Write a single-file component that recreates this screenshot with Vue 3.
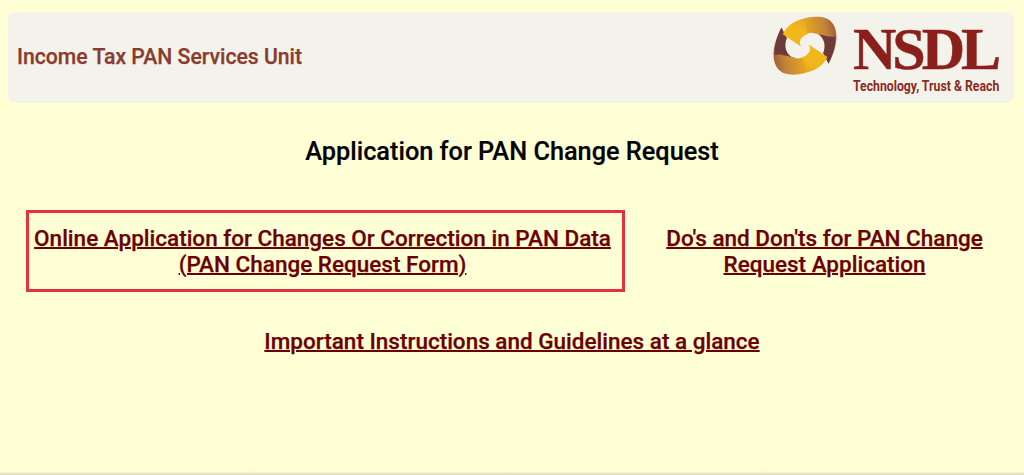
<template>
  <div class="page">
    <header class="top">
      <div class="unit">Income Tax PAN Services Unit</div>
      <div class="brand">
        <svg class="mark" viewBox="26 18 196 178" width="66" height="60">
          <defs>
            <linearGradient id="sweep" gradientUnits="userSpaceOnUse" x1="60" y1="90" x2="220" y2="60">
              <stop offset="0" stop-color="#f2b71b" />
              <stop offset="0.5" stop-color="#e0a024" />
              <stop offset="0.8" stop-color="#c0813a" />
              <stop offset="1" stop-color="#9a5a38" />
            </linearGradient>
            <linearGradient id="fade" gradientUnits="userSpaceOnUse" x1="95" y1="85" x2="115" y2="25">
              <stop offset="0.5" stop-color="#f2b71b" />
              <stop offset="1" stop-color="#f2b71b" stop-opacity="0" />
            </linearGradient>
            <path id="body" d="M58 72C75 35 125 18 165 20C225 22 232 90 194 160L178 128C192 98 172 66 145 68C120 70 100 90 112 108Z" />
            <path id="tail" d="M145 68C172 66 192 98 178 128L194 160C208 130 216 105 214 78C198 84 170 72 145 68Z" />
            <path id="head" d="M58 72C70 48 90 32 118 25L132 72C112 76 102 92 112 108Z" />
          </defs>
          <use href="#body" fill="url(#sweep)" />
          <use href="#tail" fill="#6e3a3c" />
          <g transform="rotate(180 124 106)">
            <use href="#body" fill="url(#sweep)" />
            <use href="#tail" fill="#6e3a3c" />
          </g>
          <use href="#head" fill="url(#fade)" />
          <use href="#head" fill="url(#fade)" transform="rotate(180 124 106)" />
        </svg>
        <div class="wordmark">
          <div class="nsdl">NSDL</div>
          <div class="tagline">Technology, Trust &amp; Reach</div>
        </div>
      </div>
    </header>

    <h1 class="title">Application for PAN Change Request</h1>

    <div class="links">
      <div class="boxed">
        <a href="#" class="link">Online Application for Changes Or Correction in PAN Data (PAN Change Request Form)</a>
      </div>
      <div class="side">
        <a href="#" class="link">Do's and Don'ts for PAN Change Request Application</a>
      </div>
    </div>

    <div class="guide">
      <a href="#" class="link">Important Instructions and Guidelines at a glance</a>
    </div>

    <div class="edge"></div>
  </div>
</template>

<script setup>
</script>

<style>
html, body {
  margin: 0;
  background: #ffffd5;
}
</style>

<style scoped>
.page {
  display: flex;
  flex-direction: column;
  height: 475px;
  overflow: hidden;
  background: #ffffd5;
  font-family: Roboto, "Liberation Sans", sans-serif;
}
.top {
  display: flex;
  align-items: flex-start;
  justify-content: space-between;
  height: 91px;
  margin: 12px 10px 0 8px;
  padding: 0 15px 0 9px;
  background: #f4f3eb;
  border-radius: 8px;
}
.unit {
  align-self: center;
  margin-top: -2px;
  font-size: 21.2px;
  font-weight: 500;
  -webkit-text-stroke: 0.25px #8a3b2e;
  color: #8a3b2e;
}
.brand {
  display: flex;
  align-items: flex-start;
  gap: 15px;
  padding-top: 4px;
}
.mark {
  display: block;
}
.wordmark {
  width: 146px;
  padding-top: 10px;
}
.nsdl {
  font-family: "Liberation Serif", serif;
  font-weight: 700;
  font-size: 60px;
  line-height: 46px;
  letter-spacing: -4px;
  -webkit-text-stroke: 0.5px #8b1f1c;
  color: #8b1f1c;
}
.tagline {
  margin-top: 7px;
  font-size: 14.5px;
  line-height: 16px;
  font-weight: 700;
  white-space: nowrap;
  transform: scaleX(0.845);
  transform-origin: left center;
  color: #8b2a22;
}
.title {
  margin: 33px 0 0;
  text-align: center;
  font-size: 25.3px;
  line-height: 32px;
  font-weight: 500;
  -webkit-text-stroke: 0.2px #000;
  color: #000;
}
.links {
  display: flex;
  align-items: stretch;
  margin: 42px 0 0 26px;
}
.boxed {
  box-sizing: border-box;
  width: 599px;
  height: 82px;
  padding: 12px 6px 0 0;
  border: 3px solid #e5323c;
  text-align: center;
}
.side {
  flex: 1;
  padding: 15px 30px 0;
  text-align: center;
}
.link {
  font-size: 22.5px;
  line-height: 26px;
  font-weight: 500;
  -webkit-text-stroke: 0.25px #6b0000;
  color: #6b0000;
  text-decoration: underline;
  text-decoration-thickness: 2px;
}
.guide {
  margin-top: 36px;
  text-align: center;
  line-height: 26px;
}
.edge {
  margin-top: auto;
  height: 4px;
  background: linear-gradient(#ffffd5, #dcdcbc);
}
</style>
